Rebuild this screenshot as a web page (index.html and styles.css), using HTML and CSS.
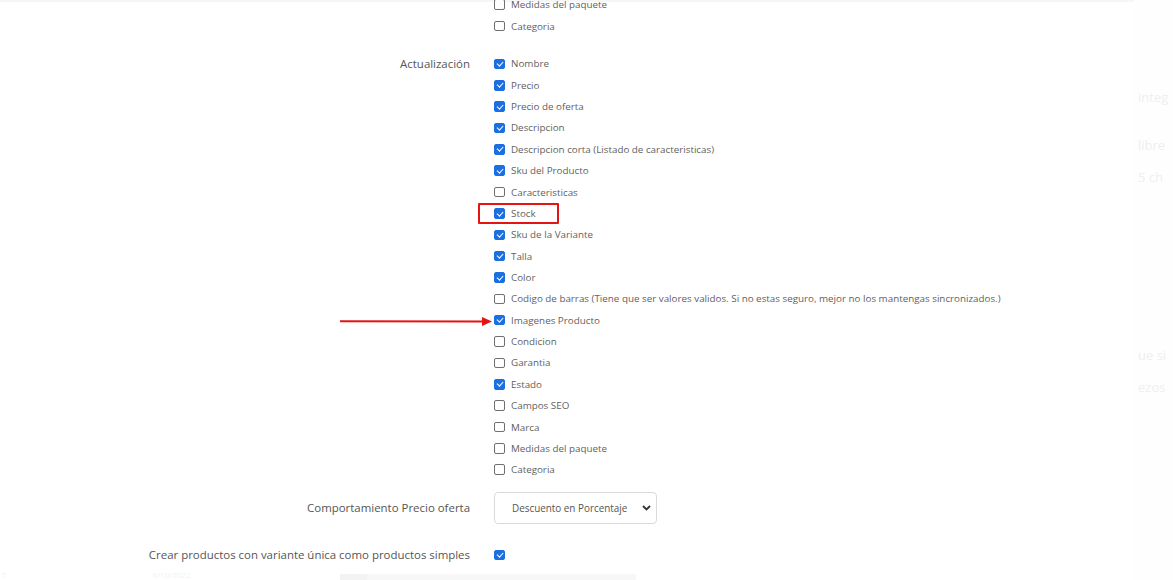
FILE: index.html
```html
<!DOCTYPE html>
<html lang="es">
<head>
<meta charset="utf-8">
<title>Configuración</title>
<link rel="stylesheet" href="styles.css">
</head>
<body>
<div class="page">
  <main class="modal">
    <section class="field group-top">
      <div class="label"></div>
      <ul class="checks">
        <li><input type="checkbox" class="cb"><span>Medidas del paquete</span></li>
        <li><input type="checkbox" class="cb"><span>Categoria</span></li>
      </ul>
    </section>

    <section class="field group-main">
      <div class="label">Actualización</div>
      <ul class="checks">
        <li><input type="checkbox" class="cb" checked><span>Nombre</span></li>
        <li><input type="checkbox" class="cb" checked><span>Precio</span></li>
        <li><input type="checkbox" class="cb" checked><span>Precio de oferta</span></li>
        <li><input type="checkbox" class="cb" checked><span>Descripcion</span></li>
        <li><input type="checkbox" class="cb" checked><span>Descripcion corta (Listado de caracteristicas)</span></li>
        <li><input type="checkbox" class="cb" checked><span>Sku del Producto</span></li>
        <li><input type="checkbox" class="cb"><span>Caracteristicas</span></li>
        <li class="highlight"><input type="checkbox" class="cb" checked><span>Stock</span><i class="red-box"></i></li>
        <li><input type="checkbox" class="cb" checked><span>Sku de la Variante</span></li>
        <li><input type="checkbox" class="cb" checked><span>Talla</span></li>
        <li><input type="checkbox" class="cb" checked><span>Color</span></li>
        <li><input type="checkbox" class="cb"><span>Codigo de barras (Tiene que ser valores validos. Si no estas seguro, mejor no los mantengas sincronizados.)</span></li>
        <li class="pointed"><svg class="red-arrow" width="154" height="10" viewBox="0 0 154 10"><path d="M0 5.2 L144 5.6" stroke="#e41414" stroke-width="2" fill="none"/><path d="M142 1 L152 5.6 L142 10 Z" fill="#e41414"/></svg><input type="checkbox" class="cb" checked><span>Imagenes Producto</span></li>
        <li><input type="checkbox" class="cb"><span>Condicion</span></li>
        <li><input type="checkbox" class="cb"><span>Garantia</span></li>
        <li><input type="checkbox" class="cb" checked><span>Estado</span></li>
        <li><input type="checkbox" class="cb"><span>Campos SEO</span></li>
        <li><input type="checkbox" class="cb"><span>Marca</span></li>
        <li><input type="checkbox" class="cb"><span>Medidas del paquete</span></li>
        <li><input type="checkbox" class="cb"><span>Categoria</span></li>
      </ul>
    </section>

    <section class="field field-select">
      <div class="label">Comportamiento Precio oferta</div>
      <div class="select">
        <span>Descuento en Porcentaje</span>
        <svg width="9" height="6" viewBox="0 0 9 6"><path d="M1 1 L4.5 4.5 L8 1" stroke="#333" stroke-width="1.8" fill="none"/></svg>
      </div>
    </section>

    <section class="field field-simple">
      <div class="label">Crear productos con variante única como productos simples</div>
      <div class="single"><input type="checkbox" class="cb" checked></div>
    </section>

    <footer class="under">
      <span class="u1">5</span>
      <span class="u2">8/10/2022</span>
      <span class="u3"></span>
    </footer>
  </main>

  <aside class="behind">
    <p class="b1">integ</p>
    <p class="b2">libre</p>
    <p class="b3">5 ch</p>
    <p class="b4">ue si</p>
    <p class="b5">ezos</p>
  </aside>
</div>
</body>
</html>
```

FILE: styles.css
```css
* { box-sizing: border-box; }

html, body {
  margin: 0;
  padding: 0;
  background: #ffffff;
}

body {
  font-family: "Open Sans", "Noto Sans", sans-serif;
  color: #555;
  width: 1173px;
  height: 580px;
  overflow: hidden;
}

.page {
  display: flex;
  height: 580px;
}

.modal {
  width: 1134px;
  flex: none;
  background: #fff;
  border-top: 2px solid #f6f6f6;
  display: flex;
  flex-direction: column;
}

.field {
  display: grid;
  grid-template-columns: 470px 1fr;
  column-gap: 24px;
}

.label {
  text-align: right;
  font-size: 11.45px;
  line-height: 21.37px;
  color: #555;
}

.checks {
  list-style: none;
  margin: 0;
  padding: 0;
}

.checks li {
  display: flex;
  align-items: center;
  height: 21.37px;
  font-size: 9.82px;
  color: #5f5f5f;
  position: relative;
}

.checks li span {
  margin-left: 6.5px;
  white-space: nowrap;
}

.cb {
  appearance: none;
  -webkit-appearance: none;
  margin: 0;
  width: 10.5px;
  height: 10.5px;
  border: 1px solid #6f6f6f;
  border-radius: 2px;
  background: #fff;
  flex: none;
  position: relative;
}

.cb:checked {
  background: #1b6fe3;
  border-color: #1b6fe3;
}

.cb:checked::after {
  content: "";
  position: absolute;
  left: 2.6px;
  top: 0.4px;
  width: 2.6px;
  height: 5.4px;
  border: solid #fff;
  border-width: 0 1.6px 1.6px 0;
  transform: rotate(42deg);
}

.group-top {
  margin-top: -8px;
}

.group-main {
  margin-top: 16.5px;
}

.red-box {
  position: absolute;
  left: -16px;
  top: 0;
  width: 81px;
  height: 21px;
  border: 2px solid #e41414;
  border-radius: 1px;
}

.red-arrow {
  position: absolute;
  left: -154px;
  top: 6px;
}

.field-select {
  margin-top: 12px;
  align-items: center;
}

.field-select .label {
  line-height: 32px;
}

.select {
  width: 163px;
  height: 32px;
  border: 1px solid #d9d9d9;
  border-radius: 4px;
  display: flex;
  align-items: center;
  justify-content: space-between;
  padding: 0 5px 0 17px;
  font-size: 9.9px;
  color: #555;
}

.field-simple {
  margin-top: 20px;
  align-items: center;
}

.single {
  display: flex;
  align-items: center;
  height: 21px;
}

.under {
  margin-top: auto;
  margin-bottom: 0;
  height: 12px;
  display: flex;
  align-items: flex-end;
  font-size: 8px;
  color: #f3f3f3;
}

.under .u1 { margin-left: 2px; line-height: 11px; }
.under .u2 { margin-left: 146px; line-height: 11px; }
.under .u3 {
  margin-left: 150px;
  width: 296px;
  height: 6px;
  background: #f7f7f7;
  border-left: 27px solid #f3f3f3;
}

.behind {
  flex: 1;
  background: #fefefe;
  color: #efefef;
  font-size: 13px;
  padding-left: 4px;
  overflow: hidden;
  white-space: nowrap;
}

.behind p { margin: 0; line-height: 16px; }
.b1 { margin-top: 89px !important; }
.b2 { margin-top: 32px !important; }
.b3 { margin-top: 16px !important; }
.b4 { margin-top: 162px !important; }
.b5 { margin-top: 16px !important; }
```
